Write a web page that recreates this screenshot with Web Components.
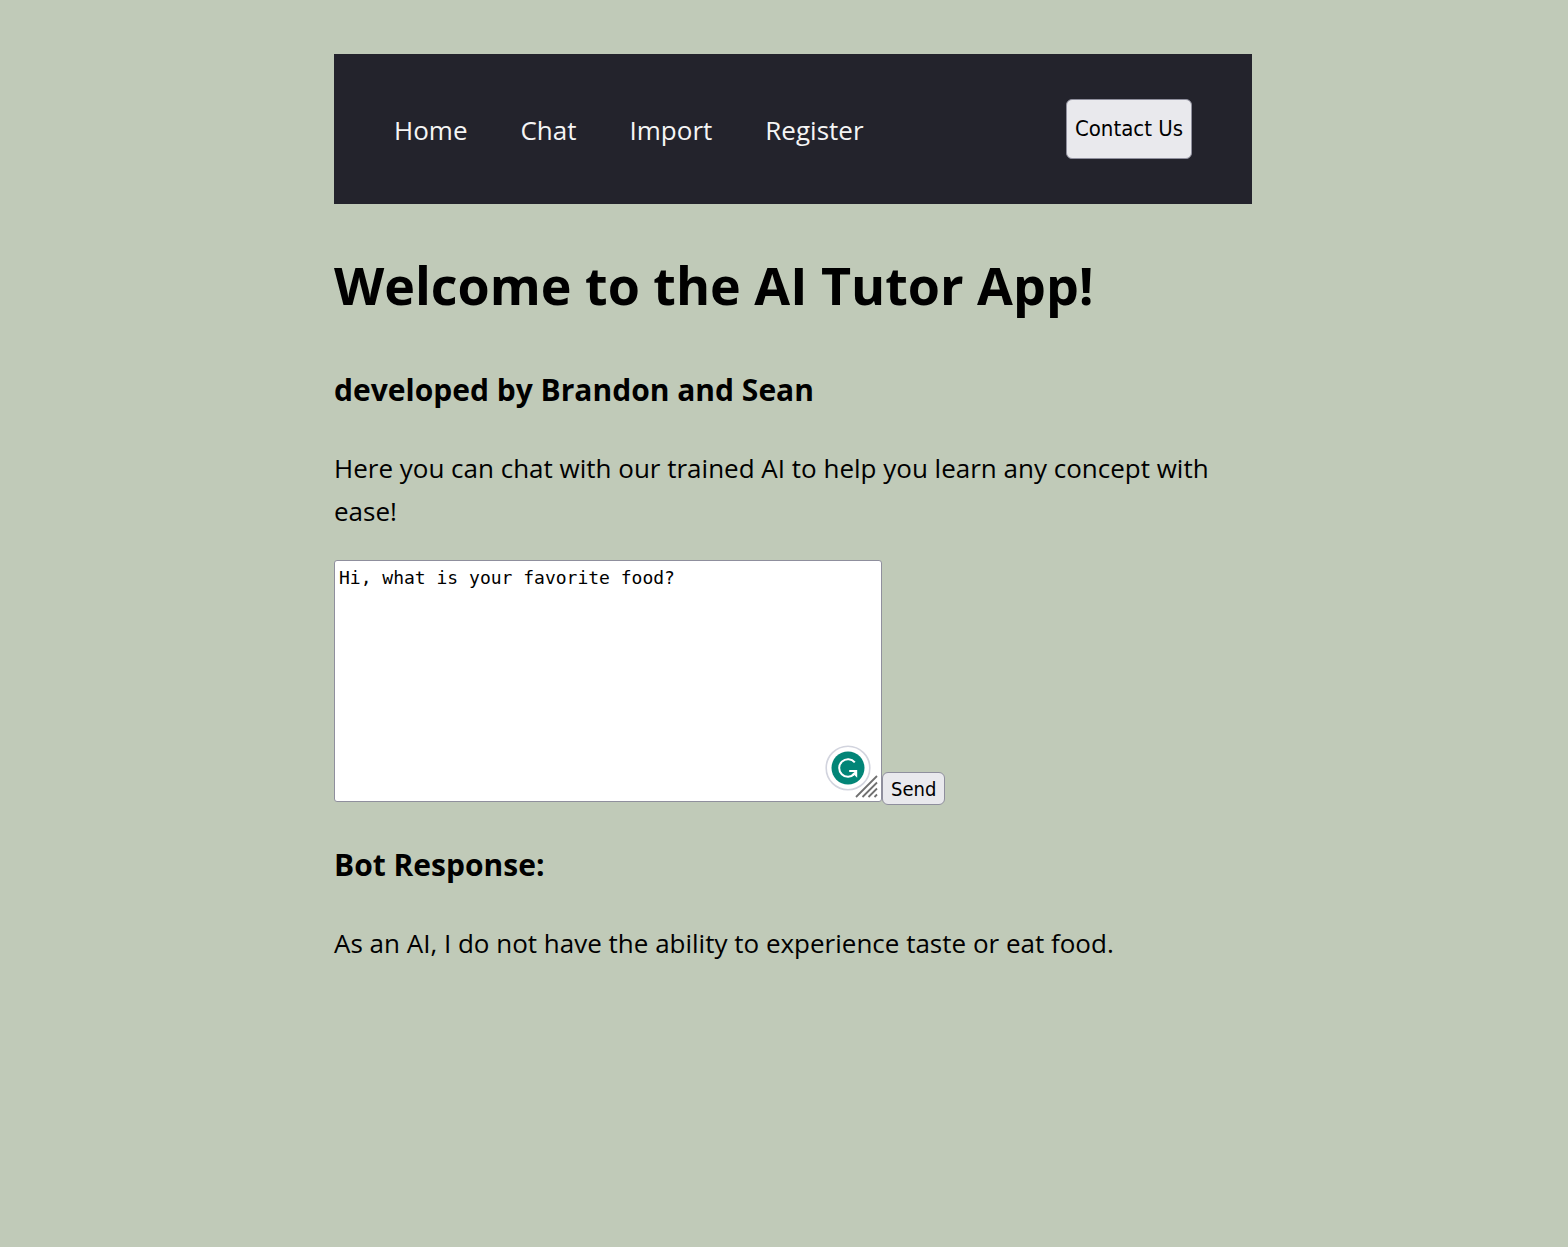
<!DOCTYPE html>
<html lang="en">
<head>
<meta charset="utf-8">
<title>AI Tutor App</title>
<style>
  body {
    margin: 0;
    padding: 54px 0 54px 18px;
    background: #c0cab8;
    color: #000;
    font: 26px/43px "Open Sans", "Noto Sans", sans-serif;
  }
</style>
</head>
<body>
<tutor-app></tutor-app>

<script>
class NavLink extends HTMLElement {
  constructor() {
    super();
    this.attachShadow({ mode: "open" }).innerHTML = `
      <style>
        :host { display: block; }
        a { color: #f5f5f5; text-decoration: none; }
        a:hover { text-decoration: underline; }
      </style>
      <a href="${this.getAttribute("to")}"><slot></slot></a>`;
  }
}

class AppButton extends HTMLElement {
  constructor() {
    super();
    this.attachShadow({ mode: "open" }).innerHTML = `
      <style>
        :host { display: block; }
        button {
          box-sizing: border-box;
          display: block;
          height: var(--button-height, 33px);
          padding: 0 8px;
          border: 1px solid #8f8f9d;
          border-radius: 6px;
          background: #e9e9ed;
          color: #000;
          font: var(--button-size, 20px)/30px "DejaVu Sans Condensed", "Noto Sans", sans-serif;
          white-space: nowrap;
        }
        button:hover { background: #d0d0d7; }
      </style>
      <button type="button"><slot></slot></button>`;
  }
}

class NavBar extends HTMLElement {
  constructor() {
    super();
    this.attachShadow({ mode: "open" }).innerHTML = `
      <style>
        :host { display: block; }
        nav {
          display: flex;
          align-items: center;
          justify-content: space-between;
          padding: 45px 60px;
          background: #23232c;
        }
        .links { display: flex; flex-wrap: wrap; gap: 0 53px; padding-top: 2px; }
        app-button { --button-height: 60px; --button-size: 22px; }
      </style>
      <nav>
        <div class="links">
          <nav-link to="#home">Home</nav-link>
          <nav-link to="#chat">Chat</nav-link>
          <nav-link to="#import">Import</nav-link>
          <nav-link to="#register">Register</nav-link>
        </div>
        <app-button>Contact Us</app-button>
      </nav>`;
  }
}

class ChatForm extends HTMLElement {
  constructor() {
    super();
    this.attachShadow({ mode: "open" }).innerHTML = `
      <style>
        :host { display: flex; align-items: flex-end; }
        .field { position: relative; flex: 0 1 548px; margin-bottom: 3px; }
        textarea {
          box-sizing: border-box;
          display: block;
          width: 100%;
          height: 242px;
          margin: 0;
          padding: 5px 4px;
          border: 1px solid #8f8f9d;
          border-radius: 3px;
          background: #fff;
          color: #000;
          font: 18px/23px "DejaVu Sans Mono", "Liberation Mono", monospace;
          resize: none;
          outline: 0;
        }
        .badge { position: absolute; right: 11px; bottom: 11px; }
        .grip { position: absolute; right: 4px; bottom: 4px; }
        svg { display: block; pointer-events: none; }
      </style>
      <div class="field">
        <textarea aria-label="Message" spellcheck="false">Hi, what is your favorite food?</textarea>
        <svg class="badge" width="46" height="46" viewBox="0 0 46 46" aria-hidden="true">
          <circle cx="23" cy="23" r="21.8" fill="#fff" stroke="#d2d4de" stroke-width="1.6"/>
          <circle cx="23" cy="23" r="16.5" fill="#028577"/>
          <path d="M29.8 17.4A8.800 8.800 0 1 0 29.500 28.900M24.200 26H30.500" fill="none" stroke="#fff" stroke-width="2"/>
          <path d="M24.500 25H32.200V32.800L29.300 30L27.800 31.200L26.500 29.600L29.500 27Z" fill="#fff"/>
        </svg>
        <svg class="grip" width="23" height="23" viewBox="0 0 23 23" aria-hidden="true">
          <path d="M1 22L22 1M7.500 22L22 7.500M13.500 22L22 13.500M19.500 22L22 19.500" stroke="#707070" stroke-width="1.8"/>
        </svg>
      </div>
      <app-button>Send</app-button>`;
  }
}

class TutorApp extends HTMLElement {
  constructor() {
    super();
    this.attachShadow({ mode: "open" }).innerHTML = `
      <style>
        :host { display: block; max-width: 918px; margin: 0 auto; }
        h1 { margin: 38px 0 36px; font-size: 52px; line-height: 86px; }
        h3 { margin: 34px 0 31px; font-size: 30px; line-height: 52px; }
        p { margin: 0 0 27px; }
      </style>
      <nav-bar></nav-bar>
      <main>
        <h1>Welcome to the AI Tutor App!</h1>
        <h3>developed by Brandon and Sean</h3>
        <p>Here you can chat with our trained AI to help you learn any concept with ease!</p>
        <chat-form></chat-form>
        <h3>Bot Response:</h3>
        <p>As an AI, I do not have the ability to experience taste or eat food.</p>
      </main>`;
  }
}

customElements.define("nav-link", NavLink);
customElements.define("app-button", AppButton);
customElements.define("nav-bar", NavBar);
customElements.define("chat-form", ChatForm);
customElements.define("tutor-app", TutorApp);
</script>
</body>
</html>
